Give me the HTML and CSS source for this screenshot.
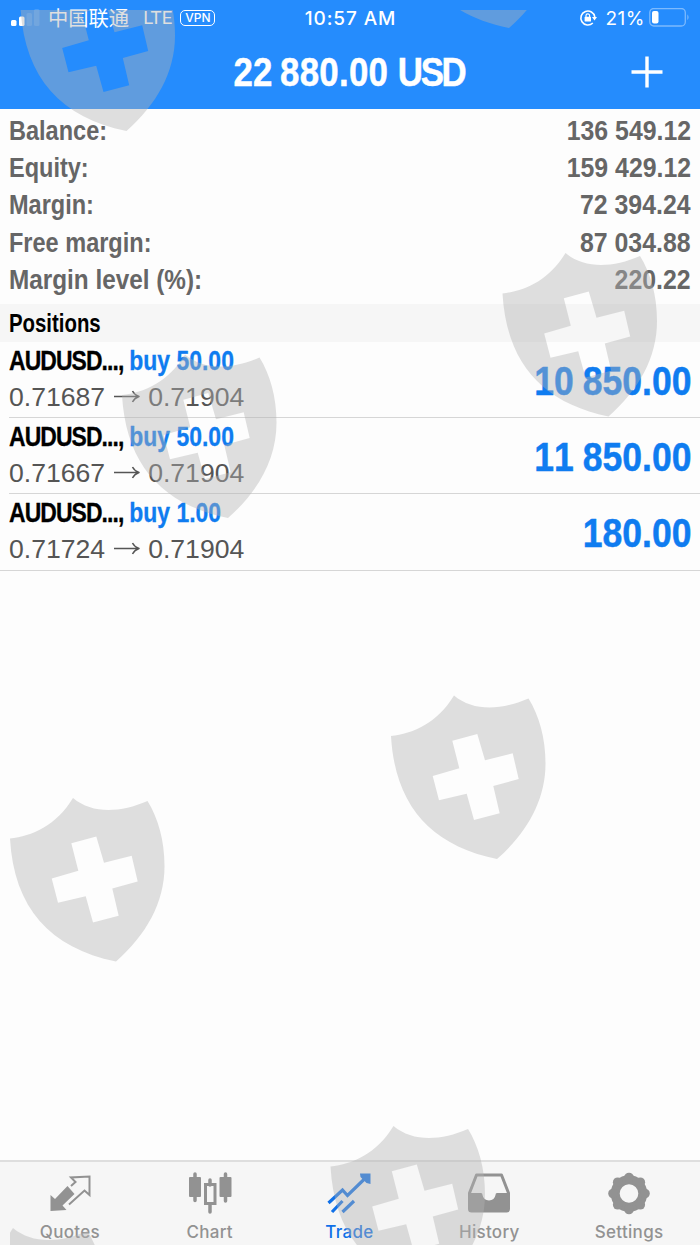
FILE: index.html
```html
<!DOCTYPE html>
<html lang="en">
<head>
    <meta charset="UTF-8">
    <meta name="viewport" content="width=device-width, initial-scale=1.0">
    <title>Trade</title>
    <link rel="stylesheet" href="styles.css">
</head>
<body>
    <div class="app">
        <header class="header">
            <div class="status-bar">
                <div class="status-left">
                    <svg class="signal" width="30" height="18" viewBox="0 0 30 18">
                        <rect x="1" y="11" width="5.5" height="6" rx="1.5" fill="#fff"/>
                        <rect x="9" y="7.5" width="5.5" height="9.500" rx="1.5" fill="#fff"/>
                        <rect x="16.5" y="4" width="5.5" height="13" rx="1.5" fill="#fff" opacity="0.15"/>
                        <rect x="24" y="0" width="5.5" height="17" rx="1.5" fill="#fff" opacity="0.15"/>
                    </svg>
                    <span class="carrier">中国联通</span>
                    <span class="network">LTE</span>
                    <span class="vpn">VPN</span>
                </div>
                <div class="time">10:57 AM</div>
                <div class="status-right">
                    <svg width="18" height="18" viewBox="0 0 18 18">
                        <path d="M15.8 8A7 7 0 1 0 13.8 14" fill="none" stroke="#fff" stroke-width="1.6"/>
                        <path d="M13 8h5l-2.500 3.500z" fill="#fff"/>
                        <rect x="5.600" y="7.800" width="6.400" height="4.800" rx="0.6" fill="#fff"/>
                        <path d="M7 8V6.600a1.800 1.800 0 0 1 3.600 0V8" fill="none" stroke="#fff" stroke-width="1.2"/>
                    </svg>
                    <span class="percent">21%</span>
                    <svg class="battery" width="42" height="20" viewBox="0 0 42 20">
                        <rect x="0.8" y="0.5" width="35.5" height="17.5" rx="4" fill="none" stroke="#fff" stroke-opacity="0.4" stroke-width="1.3"/>
                        <rect x="3" y="3" width="6.5" height="12.5" rx="2" fill="#fff"/>
                        <path d="M38.3 6.3q2.6 3 0 6z" fill="#fff" opacity="0.4"/>
                    </svg>
                </div>
            </div>
            <div class="title-bar">
                <h1><span class="num">22 880.00</span> <span class="currency">USD</span></h1>
                <svg class="add" width="32" height="32" viewBox="0 0 32 32">
                    <path d="M16 0.5v31M0.5 16h31" stroke="#fff" stroke-width="3.4"/>
                </svg>
            </div>
        </header>

        <section class="summary">
            <div class="summary-row"><span class="label">Balance:</span><span class="num">136 549.12</span></div>
            <div class="summary-row"><span class="label">Equity:</span><span class="num">159 429.12</span></div>
            <div class="summary-row"><span class="label">Margin:</span><span class="num">72 394.24</span></div>
            <div class="summary-row"><span class="label">Free margin:</span><span class="num">87 034.88</span></div>
            <div class="summary-row"><span class="label wide">Margin level (%):</span><span class="num">220.22</span></div>
        </section>

        <h2 class="section-title"><span>Positions</span></h2>

        <main class="positions">
            <div class="position">
                <div class="position-info">
                    <div class="symbol"><span>AUDUSD...,</span><span class="side">buy 50.00</span></div>
                    <div class="prices">
                        <span>0.71687</span>
                        <svg width="27" height="14" viewBox="0 0 27 14"><path d="M1 6.500h25M19.500 1Q21.500 5 26 6.500Q21.500 8 19.500 12" fill="none" stroke="#555" stroke-width="1.5" stroke-linejoin="round"/></svg>
                        <span>0.71904</span>
                    </div>
                </div>
                <div class="profit">10 850.00</div>
            </div>
            <div class="position">
                <div class="position-info">
                    <div class="symbol"><span>AUDUSD...,</span><span class="side">buy 50.00</span></div>
                    <div class="prices">
                        <span>0.71667</span>
                        <svg width="27" height="14" viewBox="0 0 27 14"><path d="M1 6.500h25M19.500 1Q21.500 5 26 6.500Q21.500 8 19.500 12" fill="none" stroke="#555" stroke-width="1.5" stroke-linejoin="round"/></svg>
                        <span>0.71904</span>
                    </div>
                </div>
                <div class="profit">11 850.00</div>
            </div>
            <div class="position">
                <div class="position-info">
                    <div class="symbol"><span>AUDUSD...,</span><span class="side">buy 1.00</span></div>
                    <div class="prices">
                        <span>0.71724</span>
                        <svg width="27" height="14" viewBox="0 0 27 14"><path d="M1 6.500h25M19.500 1Q21.500 5 26 6.500Q21.500 8 19.500 12" fill="none" stroke="#555" stroke-width="1.5" stroke-linejoin="round"/></svg>
                        <span>0.71904</span>
                    </div>
                </div>
                <div class="profit">180.00</div>
            </div>
        </main>

        <nav class="tab-bar">
            <div class="tab">
                <svg width="44" height="44" viewBox="0 0 44 44">
                    <path d="M2.500 39V23l4.500 4L19.500 14l7 8L14.500 33.500l4 4.500z" fill="#929292"/>
                    <path d="M23 14l4.500-4-4.500-4.500L41.500 4.500V23l-5-4.500L21 32.500" fill="none" stroke="#929292" stroke-width="2"/>
                </svg>
                <span>Quotes</span>
            </div>
            <div class="tab">
                <svg width="44" height="44" viewBox="0 0 44 44">
                    <path d="M7 2v26.500M37.500 2v27M22 8v5M22 32v8" stroke="#929292" stroke-width="3.500" stroke-linecap="round"/>
                    <rect x="1" y="5" width="12" height="20" rx="1" fill="#929292"/>
                    <rect x="31.500" y="5" width="12" height="20" rx="1" fill="#929292"/>
                    <rect x="17.500" y="12.500" width="9.500" height="19" fill="none" stroke="#929292" stroke-width="3"/>
                </svg>
                <span>Chart</span>
            </div>
            <div class="tab active">
                <svg width="44" height="44" viewBox="0 0 44 44">
                    <path d="M1.500 31L15.500 18l5 5.500L39.500 5M5 40L15.500 29M15.500 40L27 29" fill="none" stroke="#0f70e8" stroke-width="3.200"/>
                    <path d="M33 1.500h10.500v10.500l-4-1-6-6z" fill="#0f70e8"/>
                </svg>
                <span>Trade</span>
            </div>
            <div class="tab">
                <svg width="44" height="44" viewBox="0 0 44 44">
                    <path d="M9.500 3h25l7 18v16q0 2-2 2H4.500q-2 0-2-2v-16z" fill="none" stroke="#929292" stroke-width="3" stroke-linejoin="round"/>
                    <path d="M2 21H14q1.500 0 1.500 2a6.600 6.600 0 0 0 13 0q0-2 1.500-2h12V39H2z" fill="#929292"/>
                </svg>
                <span>History</span>
            </div>
            <div class="tab">
                <svg width="44" height="44" viewBox="0 0 44 44">
                    <circle cx="22" cy="21.500" r="13.800" fill="none" stroke="#929292" stroke-width="9"/>
                    <g fill="#929292">
                        <circle cx="22" cy="5.500" r="4.800"/>
                        <circle cx="33.300" cy="10.200" r="4.800"/>
                        <circle cx="38" cy="21.500" r="4.800"/>
                        <circle cx="33.300" cy="32.800" r="4.800"/>
                        <circle cx="22" cy="37.500" r="4.800"/>
                        <circle cx="10.700" cy="32.800" r="4.800"/>
                        <circle cx="6" cy="21.500" r="4.800"/>
                        <circle cx="10.700" cy="10.200" r="4.800"/>
                    </g>
                </svg>
                <span>Settings</span>
            </div>
        </nav>

        <!-- shield watermark over the whole screen -->
        <svg class="watermark" width="700" height="1245" viewBox="0 0 700 1245">
            <defs>
                <path id="shield" fill-rule="evenodd" d="M0 40.500C22 38 46 28 63 0C82 16 110 15 137.500 3C148 20 154.500 42 154.500 68C154.500 105 136 137 106 163.500C40 150 4 110 0 40.500ZM61.300 45.200L68.300 72.800L41.700 80.500L48 104.800L75.700 98.200L83 124.500L108.700 117.800L102.300 90.500L127.700 83.500L121.700 57.800L94 64.800L86.300 38.500Z"/>
                <clipPath id="edge"><rect x="10" y="10" width="690" height="1235"/></clipPath>
            </defs>
            <g clip-path="url(#edge)">
                <use href="#shield" x="20.500" y="-32.500"/>
                <use href="#shield" x="403" y="-135.500"/>
                <use href="#shield" x="502.500" y="253"/>
                <use href="#shield" x="122" y="354.500"/>
                <use href="#shield" x="391" y="695.500"/>
                <use href="#shield" x="10" y="798"/>
                <use href="#shield" x="330.500" y="1126"/>
                <use href="#shield" x="-50" y="1228"/>
            </g>
        </svg>
    </div>
</body>
</html>
```
FILE: styles.css
```css
* {
    margin: 0;
    padding: 0;
    box-sizing: border-box;
}

body {
    font-family: "Liberation Sans", sans-serif;
    background-color: #fdfdfd;
}

.app {
    position: relative;
    display: flex;
    flex-direction: column;
    width: 700px;
    height: 1245px;
    overflow: hidden;
}

.header {
    height: 109px;
    background-color: #258cfd;
    color: #fff;
}

.status-bar {
    display: grid;
    grid-template-columns: 1fr auto 1fr;
    align-items: center;
    height: 36px;
    padding: 0 9px 0 10px;
    font-family: Inter, "Noto Sans CJK SC", sans-serif;
    font-size: 19px;
}

.status-left, .status-right {
    display: flex;
    align-items: center;
}

.status-right {
    justify-content: flex-end;
}

.carrier {
    margin-left: 8px;
    font-family: "Noto Sans CJK SC", sans-serif;
    font-size: 20.3px;
    line-height: 34px;
    padding-bottom: 2px;
}

.network {
    margin-left: 14px;
    font-family: Roboto, sans-serif;
    font-size: 18.5px;
}

.vpn {
    height: 16px;
    margin-left: 8px;
    padding: 0 4px;
    border: 1.5px solid #fff;
    border-radius: 5px;
    font-size: 12px;
    font-weight: 500;
    line-height: 13px;
}

.time {
    font-weight: 500;
    letter-spacing: 0.9px;
}

.percent {
    margin: 0 4px 0 9px;
    letter-spacing: 0.5px;
}

.title-bar {
    display: grid;
    grid-template-columns: 1fr auto 1fr;
    align-items: center;
    height: 71px;
}

.title-bar h1 {
    grid-column: 2;
    font-size: 41px;
    line-height: 71px;
    transform: translate(-1px, 1px) scaleX(0.85);
    -webkit-text-stroke: 0.5px;
}

.title-bar .num {
    letter-spacing: 0.3px;
    word-spacing: -3px;
}

.currency {
    letter-spacing: -2.8px;
}

.add {
    justify-self: end;
    margin-right: 37px;
}

.summary {
    height: 195px;
    padding: 4px 9px 0;
    color: #666;
}

.summary-row {
    display: flex;
    justify-content: space-between;
    height: 37.2px;
    font-size: 28px;
    font-weight: bold;
    line-height: 36px;
}

/* the bold text is squeezed into a condensed face */
.label {
    transform: scaleX(0.84);
    transform-origin: left;
}

.label.wide {
    transform: scaleX(0.868);
}

.summary-row .num {
    transform: scaleX(0.888);
    transform-origin: right;
}

.section-title {
    height: 38px;
    padding-left: 9px;
    background-color: #f6f6f6;
    font-size: 25px;
    line-height: 39px;
}

.section-title span {
    display: inline-block;
    transform: scaleX(0.815);
    transform-origin: left;
}

.positions {
    flex: 1;
}

.position {
    display: flex;
    justify-content: space-between;
    height: 76px;
    margin-left: 9px;
    padding-right: 9px;
    border-bottom: 1px solid #d6d6d6;
}

.position:last-child {
    height: 77px;
    margin-left: 0;
    padding-left: 9px;
}

.symbol {
    display: flex;
    gap: 7px;
    height: 37px;
    font-size: 27px;
    font-weight: bold;
    line-height: 39px;
    letter-spacing: -1.1px;
    transform: scaleX(0.85);
    transform-origin: left;
    -webkit-text-stroke: 0.3px;
}

.side {
    color: #0f7cf0;
    letter-spacing: 0;
}

.prices {
    display: flex;
    align-items: center;
    gap: 8px;
    height: 36px;
    color: #555;
    font-family: "Liberation Sans", sans-serif;
    font-size: 26.6px;
}

.profit {
    color: #0f7cf0;
    font-size: 41px;
    font-weight: bold;
    font-kerning: none;
    line-height: 78px;
    word-spacing: -1px;
    transform: scaleX(0.866);
    transform-origin: right;
    -webkit-text-stroke: 0.5px;
}

.tab-bar {
    display: grid;
    grid-template-columns: repeat(5, 1fr);
    height: 85px;
    padding: 10px 1px 0 0;
    border-top: 2px solid #dedede;
    background-color: #f6f6f6;
}

.tab {
    display: flex;
    flex-direction: column;
    align-items: center;
    gap: 4px;
    color: #929292;
    font-family: Inter, sans-serif;
    font-size: 17px;
    font-weight: 500;
    line-height: 24px;
    letter-spacing: 0.3px;
}

.active {
    color: #0f70e8;
}

.watermark {
    position: absolute;
    top: 0;
    left: 0;
    fill: #b3b3b3;
    opacity: 0.417;
}
```
